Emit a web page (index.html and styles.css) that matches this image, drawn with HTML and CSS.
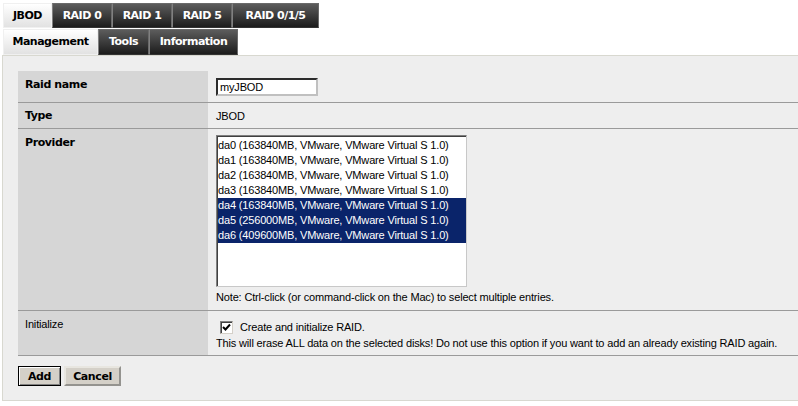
FILE: index.html
```html
<!DOCTYPE html>
<html>
<head>
<meta charset="utf-8">
<link rel="stylesheet" href="styles.css">
</head>
<body>
<div class="tabs tabs-main">
  <a class="tab active">JBOD</a>
  <a class="tab">RAID 0</a>
  <a class="tab">RAID 1</a>
  <a class="tab">RAID 5</a>
  <a class="tab">RAID 0/1/5</a>
</div>
<div class="tabs tabs-sub">
  <a class="tab active">Management</a>
  <a class="tab">Tools</a>
  <a class="tab">Information</a>
</div>
<div class="panel">
  <table class="form">
    <tr class="r-name">
      <td class="label bold">Raid name</td>
      <td class="value"><input class="text" type="text" value="myJBOD"></td>
    </tr>
    <tr class="r-type">
      <td class="label bold">Type</td>
      <td class="value">JBOD</td>
    </tr>
    <tr class="r-prov">
      <td class="label bold">Provider</td>
      <td class="value">
        <div class="listbox">
          <div class="opt">da0 (163840MB, VMware, VMware Virtual S 1.0)</div>
          <div class="opt">da1 (163840MB, VMware, VMware Virtual S 1.0)</div>
          <div class="opt">da2 (163840MB, VMware, VMware Virtual S 1.0)</div>
          <div class="opt">da3 (163840MB, VMware, VMware Virtual S 1.0)</div>
          <div class="opt sel">da4 (163840MB, VMware, VMware Virtual S 1.0)</div>
          <div class="opt sel">da5 (256000MB, VMware, VMware Virtual S 1.0)</div>
          <div class="opt sel">da6 (409600MB, VMware, VMware Virtual S 1.0)</div>
        </div>
        <div class="note">Note: Ctrl-click (or command-click on the Mac) to select multiple entries.</div>
      </td>
    </tr>
    <tr class="r-init">
      <td class="label">Initialize</td>
      <td class="value">
        <div class="check-line"><span class="checkbox"><svg width="9" height="9" viewBox="0 0 9 9"><path d="M1 4 L3.5 6.5 L8 1.5" fill="none" stroke="#000" stroke-width="2"/></svg></span>Create and initialize RAID.</div>
        <div class="warn">This will erase ALL data on the selected disks! Do not use this option if you want to add an already existing RAID again.</div>
      </td>
    </tr>
  </table>
  <div class="buttons">
    <button class="btn default">Add</button>
    <button class="btn">Cancel</button>
  </div>
</div>
</body>
</html>
```

FILE: styles.css
```css
html, body {
  margin: 0;
  padding: 0;
  background: #ffffff;
  font-family: "Liberation Sans", Arial, sans-serif;
  font-size: 11px;
  letter-spacing: -0.16px;
  color: #000;
  overflow: hidden;
}
.tabs {
  display: flex;
  padding-left: 3px;
}
.tabs-main { padding-top: 3px; }
.tabs-sub { margin-top: 1px; }
.tab {
  display: block;
  box-sizing: border-box;
  height: 25px;
  line-height: 23px;
  padding: 0;
  text-align: center;
  white-space: nowrap;
  font-family: "DejaVu Sans", Verdana, sans-serif;
  font-weight: bold;
  font-size: 11px;
  letter-spacing: -0.5px;
  color: #fff;
  background: linear-gradient(#5c5c5c, #1c1c1c);
  border: 1px solid #6a6a6a;
  border-left-color: #808080;
  border-bottom-color: #333;
}
.tab.active {
  color: #000;
  background: linear-gradient(#ffffff, #e2e2e2);
  border-color: #f0f0f0;
}
.tabs-main .tab:nth-child(1) { width: 49px; }
.tabs-main .tab:nth-child(2) { width: 60px; }
.tabs-main .tab:nth-child(3) { width: 60px; }
.tabs-main .tab:nth-child(4) { width: 60px; }
.tabs-main .tab:nth-child(5) { width: 87px; }
.tabs-sub .tab { height: 26px; line-height: 24px; }
.tabs-sub .tab:nth-child(1) { width: 95px; }
.tabs-sub .tab:nth-child(2) { width: 51px; }
.tabs-sub .tab:nth-child(3) { width: 89px; }
.panel {
  margin-left: 2px;
  border: 1px solid #d8d8d0;
  border-right: none;
  background: #eeeeee;
  padding: 15px 0 14px 15px;
}
.form {
  width: 100%;
  border-collapse: collapse;
}
.form td {
  border-bottom: 1px solid #9a9a9a;
  vertical-align: top;
  padding: 0;
}
.form td.label {
  width: 183px;
  padding-left: 7px;
  background: #d6d6d6;
}
.bold {
  font-family: "DejaVu Sans", Verdana, sans-serif;
  font-weight: bold;
  letter-spacing: -0.4px;
}
.form td.value { padding-left: 8px; }
.r-name td.label { padding-top: 7px; padding-bottom: 10px; }
.r-name td.value { padding-top: 7px; padding-bottom: 6px; }
.text {
  box-sizing: border-box;
  width: 102px;
  height: 18px;
  margin: 0;
  padding: 1px 2px;
  font-family: "Liberation Sans", Arial, sans-serif;
  font-size: 11px;
  letter-spacing: -0.16px;
  border: 2px inset #c0c0c0;
  border-top-color: #808080;
  border-left-color: #808080;
  background: #fff;
  display: block;
}
.r-type td { padding-top: 6px; padding-bottom: 5px; line-height: 14px; }
.r-prov td.label { padding-top: 7px; }
.r-prov td.value { padding-top: 6px; padding-bottom: 6px; }
.listbox {
  box-sizing: border-box;
  width: 251px;
  height: 152px;
  background: #fff;
  border: 1px solid #7f7f7f;
  border-right-color: #c8c8c8;
  border-bottom-color: #c8c8c8;
  box-shadow: inset 1px 1px 0 #404040;
  padding: 2px 0 0 1px;
}
.opt {
  height: 15px;
  line-height: 15px;
  white-space: nowrap;
}
.opt.sel {
  background: #0a246a;
  color: #fff;
}
.note { margin-top: 3px; line-height: 14px; }
.r-init td.label { padding-top: 7px; }
.r-init td.value { padding-top: 9px; padding-bottom: 5px; }
.check-line {
  display: flex;
  align-items: center;
  padding-left: 4px;
  line-height: 14px;
}
.checkbox {
  box-sizing: border-box;
  width: 13px;
  height: 13px;
  margin-right: 7px;
  background: #fff;
  border: 1px solid #808080;
  border-right-color: #d4d0c8;
  border-bottom-color: #d4d0c8;
  box-shadow: inset 1px 1px 0 #404040;
  display: flex;
  align-items: center;
  justify-content: center;
}
.warn { margin-top: 2px; line-height: 14px; white-space: nowrap; }
.buttons {
  display: flex;
  gap: 3px;
  margin-top: 10px;
}
.btn {
  box-sizing: border-box;
  height: 20px;
  margin: 0;
  padding: 0;
  font-family: "DejaVu Sans", Verdana, sans-serif;
  font-weight: bold;
  font-size: 11px;
  letter-spacing: -0.4px;
  background: #d4d0c8;
  border: 2px outset #e8e6e0;
  color: #000;
}
.btn.default {
  width: 43px;
  border: 1px solid #000;
  box-shadow: inset 1px 1px 0 #fff, inset -1px -1px 0 #808080;
}
.btn:not(.default) { width: 57px; }
```
